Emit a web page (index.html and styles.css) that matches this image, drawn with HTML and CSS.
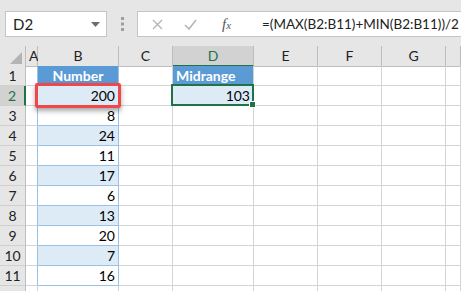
FILE: index.html
```html
<!DOCTYPE html>
<html lang="en-us">

<head>
<meta charset="utf-8">
<title>Midrange</title>
<link rel="stylesheet" href="styles.css">
</head>

<body>

<div class="toolbar">
    <div class="nameBox">
        <span>D2</span>
        <svg class="dropArrow" width="9" height="5" viewBox="0 0 9 5"><path d="M0 0h9L4.5 5z" fill="#6d6d6d"/></svg>
    </div>
    <div class="grip">
        <svg width="3" height="14" viewBox="0 0 3 14"><rect x="0" y="0" width="3" height="3" fill="#9e9e9e"/><rect x="0" y="5.5" width="3" height="3" fill="#9e9e9e"/><rect x="0" y="11" width="3" height="3" fill="#9e9e9e"/></svg>
    </div>
    <div class="formulaBox">
        <svg class="fIcon cancel" width="11" height="11" viewBox="0 0 11 11"><path d="M1 1l9 9M10 1l-9 9" stroke="#b5b5b5" stroke-width="1.4"/></svg>
        <svg class="fIcon enter" width="13" height="11" viewBox="0 0 13 11"><path d="M1 6l4 4 7-9" stroke="#b5b5b5" stroke-width="1.6" fill="none"/></svg>
        <span class="fx">f<small>x</small></span>
        <span class="formula">=(MAX(B2:B11)+MIN(B2:B11))/2</span>
    </div>
</div>

<div class="sheet">
    <div class="row head">
        <div class="corner"><svg width="12" height="12" viewBox="0 0 12 12"><path d="M12 0v12H0z" fill="#b4b4b4"/></svg></div>
        <div>A</div><div>B</div><div>C</div><div class="active">D</div><div>E</div><div>F</div><div>G</div><div></div>
    </div>
    <div class="row">
        <div class="rh">1</div><div class="colA"></div><div class="colB title">Number</div><div></div><div class="label">Midrange</div><div></div><div></div><div></div><div></div>
    </div>
    <div class="row">
        <div class="rh active">2</div><div class="colA"></div><div class="colB band num">200<span class="callout"></span></div><div></div><div class="band num">103<span class="selection"><i class="handle"></i></span></div><div></div><div></div><div></div><div></div>
    </div>
    <div class="row">
        <div class="rh">3</div><div class="colA"></div><div class="colB num">8</div><div></div><div></div><div></div><div></div><div></div><div></div>
    </div>
    <div class="row">
        <div class="rh">4</div><div class="colA"></div><div class="colB band num">24</div><div></div><div></div><div></div><div></div><div></div><div></div>
    </div>
    <div class="row">
        <div class="rh">5</div><div class="colA"></div><div class="colB num">11</div><div></div><div></div><div></div><div></div><div></div><div></div>
    </div>
    <div class="row">
        <div class="rh">6</div><div class="colA"></div><div class="colB band num">17</div><div></div><div></div><div></div><div></div><div></div><div></div>
    </div>
    <div class="row">
        <div class="rh">7</div><div class="colA"></div><div class="colB num">6</div><div></div><div></div><div></div><div></div><div></div><div></div>
    </div>
    <div class="row">
        <div class="rh">8</div><div class="colA"></div><div class="colB band num">13</div><div></div><div></div><div></div><div></div><div></div><div></div>
    </div>
    <div class="row">
        <div class="rh">9</div><div class="colA"></div><div class="colB num">20</div><div></div><div></div><div></div><div></div><div></div><div></div>
    </div>
    <div class="row">
        <div class="rh">10</div><div class="colA"></div><div class="colB band num">7</div><div></div><div></div><div></div><div></div><div></div><div></div>
    </div>
    <div class="row">
        <div class="rh">11</div><div class="colA"></div><div class="colB num">16</div><div></div><div></div><div></div><div></div><div></div><div></div>
    </div>
    <div class="row">
        <div class="rh"></div><div></div><div></div><div></div><div></div><div></div><div></div><div></div><div></div>
    </div>
</div>

</body>

</html>
```

FILE: styles.css
```css
body {
    margin: 0;
    width: 461px;
    height: 291px;
    overflow: hidden;
    background-color: #ffffff;
    font-family: Lato, "Liberation Sans", sans-serif;
}

/* formula bar */
.toolbar {
    display: flex;
    align-items: flex-start;
    height: 46px;
    padding: 11px 0 0 5px;
    box-sizing: border-box;
    background-color: #e6e6e6;
}
.nameBox {
    flex-shrink: 0;
    display: flex;
    align-items: center;
    justify-content: space-between;
    width: 102px;
    height: 26px;
    box-sizing: border-box;
    padding: 0 6px 0 7px;
    background-color: #ffffff;
    border: 1px solid #c6c6c6;
    font-size: 15px;
    color: #222;
}
.grip {
    flex-shrink: 0;
    width: 30px;
    height: 26px;
    display: flex;
    align-items: center;
    justify-content: center;
}
.formulaBox {
    flex: 1;
    min-width: 0;
    overflow: hidden;
    display: flex;
    align-items: center;
    height: 26px;
    box-sizing: border-box;
    margin-right: -2px;
    padding-left: 14px;
    background-color: #ffffff;
    border: 1px solid #c6c6c6;
}
.fIcon {
    flex-shrink: 0;
}
.cancel {
    margin-right: 21px;
}
.enter {
    margin-right: 25px;
}
.fx {
    flex-shrink: 0;
    font-family: "Liberation Serif", serif;
    font-style: italic;
    font-size: 15px;
    color: #555;
    width: 40px;
}
.fx small {
    font-size: 11px;
}
.formula {
    font-size: 13.5px;
    color: #222;
    white-space: nowrap;
}

/* grid */
.sheet {
    height: 245px;
    overflow: hidden;
}
.row {
    display: grid;
    grid-template-columns: 26px 12px 81px 54px 81px 64px 64px 64px 1fr;
    height: 20px;
}
.row > div {
    position: relative;
    box-sizing: border-box;
    border-right: 1px solid #d4d4d4;
    border-bottom: 1px solid #d4d4d4;
    font-size: 14px;
    line-height: 19px;
    color: #000;
    padding: 0 3px;
    white-space: nowrap;
}
.head > div {
    background-color: #e6e6e6;
    border-color: #bdbdbd;
    text-align: center;
    color: #222;
}
.head > .corner {
    display: flex;
    align-items: flex-end;
    justify-content: flex-end;
    padding: 0 3px 2px 0;
}
.head > .active {
    background-color: #d2d2d2;
    color: #217346;
    border-bottom: 2px solid #217346;
}
.row > .rh {
    background-color: #e6e6e6;
    border-right-color: #bdbdbd;
    border-bottom-color: #cfcfcf;
    text-align: center;
    color: #222;
}
.row > .rh.active {
    background-color: #d2d2d2;
    color: #217346;
    border-right: 2px solid #217346;
}
.row > .colA {
    border-right-color: #9bc2e6;
}
.row > .colB {
    border-right-color: #9bc2e6;
    border-bottom-color: #9bc2e6;
}
.row > .title,
.row > .label {
    background-color: #5b9bd5;
    color: #ffffff;
    font-weight: bold;
}
.row > .title {
    text-align: center;
}
.row > .band {
    background-color: #ddebf7;
}
.row > .num {
    text-align: right;
}

/* overlays */
.callout {
    position: absolute;
    left: -3px;
    top: -3px;
    right: -3px;
    bottom: -3px;
    border: 3px solid #f0474a;
    border-radius: 2px;
    box-shadow: 0 3px 5px rgba(0, 0, 0, 0.35);
    z-index: 2;
}
.selection {
    position: absolute;
    left: -2px;
    top: -2px;
    right: -1px;
    bottom: -1px;
    border: 2px solid #217346;
    z-index: 2;
}
.handle {
    position: absolute;
    right: -4px;
    bottom: -4px;
    width: 5px;
    height: 5px;
    background-color: #217346;
    border: 1px solid #ffffff;
}
```
